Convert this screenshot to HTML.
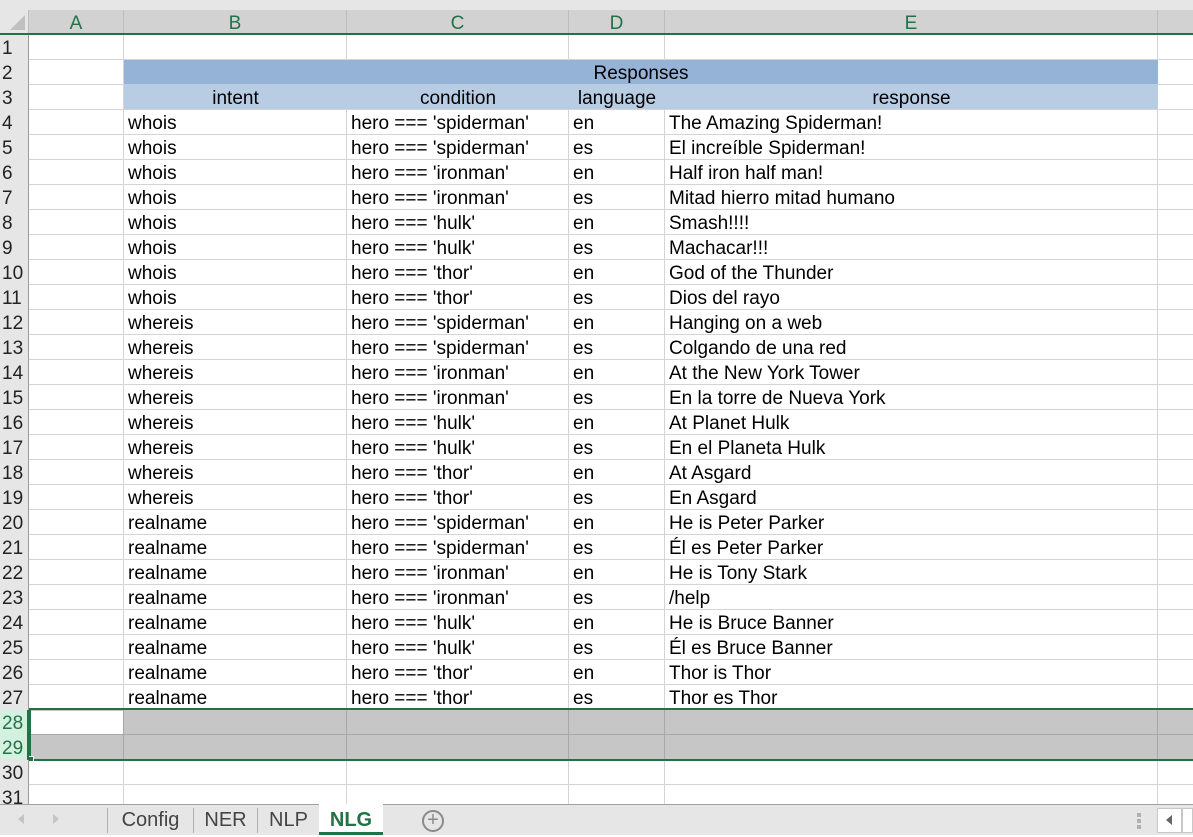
<!DOCTYPE html>
<html><head><meta charset="utf-8"><style>
*{margin:0;padding:0;box-sizing:border-box}
body{width:1193px;height:835px;overflow:hidden;background:#fff;font-family:"Liberation Sans",Arial,sans-serif;position:relative}
.a{position:absolute}
.top{left:0;top:0;width:1193px;height:10px;background:#e6e6e6}
.colh{top:10px;height:25px;background:#e6e6e6;border-bottom:2px solid #217346;left:0;width:1193px}
.ch{position:absolute;top:10px;height:23px;line-height:27px;text-align:center;color:#217346;font-size:19px;border-right:1px solid #bdbdbd;background:#d2d2d2}
.grid{left:29px;top:35px;width:1164px;height:769px;
background-image:linear-gradient(to bottom,transparent 24px,#d4d4d4 24px,#d4d4d4 25px);background-size:100% 25px}
.v{position:absolute;top:35px;height:769px;width:1px;background:#d4d4d4}
.rh{position:absolute;left:0;width:29px;height:769px;top:35px;background:#e6e6e6;border-right:1px solid #9b9b9b}
.rn{position:absolute;left:2px;font-size:19px;height:25px;line-height:27px;color:#222}
.t{position:absolute;font-size:19px;height:25px;line-height:29px;color:#000;white-space:nowrap}
.tabs{left:0;top:804px;width:1193px;height:31px;background:#e6e6e6;border-top:1px solid #a0a0a0}
.tab{position:absolute;top:804px;height:31px;line-height:33px;font-size:20px;color:#444;text-align:center}
.sep{position:absolute;top:808px;width:1px;height:25px;background:#b0b0b0}
</style></head><body>
<div class="a top"></div>
<div class="a colh"></div>
<div class="ch" style="left:0;width:29px;background:#e6e6e6;border-right:1px solid #bdbdbd"><svg width="29" height="23" style="position:absolute;left:0;top:0"><polygon points="25,5 25,20 10,20" fill="#c0c0c0"/></svg></div>
<div class="ch" style="left:29px;width:95px">A</div>
<div class="ch" style="left:124px;width:223px">B</div>
<div class="ch" style="left:347px;width:222px">C</div>
<div class="ch" style="left:569px;width:96px">D</div>
<div class="ch" style="left:665px;width:493px">E</div>
<div class="ch" style="left:1158px;width:40px"></div>
<div class="a grid"></div>
<div class="v" style="left:123px"></div><div class="v" style="left:346px"></div><div class="v" style="left:568px"></div><div class="v" style="left:664px"></div><div class="v" style="left:1157px"></div>
<div class="a" style="left:124px;top:60px;width:1034px;height:24px;background:#95b3d7"></div>
<div class="a" style="left:124px;top:84px;width:1034px;height:25px;background:#b8cce4"></div>
<div class="a" style="left:29px;top:709px;width:1164px;height:51px;background:#c6c6c6"></div>
<div class="a" style="left:29px;top:711px;width:95px;height:24px;background:#fff"></div>
<div class="a" style="left:29px;top:734px;width:1164px;height:1px;background:#a8a8a8"></div>
<div class="a" style="left:123px;top:709px;width:1px;height:51px;background:#a8a8a8"></div>
<div class="a" style="left:346px;top:709px;width:1px;height:51px;background:#a8a8a8"></div>
<div class="a" style="left:568px;top:709px;width:1px;height:51px;background:#a8a8a8"></div>
<div class="a" style="left:664px;top:709px;width:1px;height:51px;background:#a8a8a8"></div>
<div class="a" style="left:1157px;top:709px;width:1px;height:51px;background:#a8a8a8"></div>
<div class="a" style="left:29px;top:708px;width:1164px;height:2px;background:#217346"></div>
<div class="a" style="left:29px;top:759px;width:1164px;height:2px;background:#217346"></div>
<div class="a" style="left:29px;top:709px;width:2px;height:51px;background:#217346"></div>
<div class="a" style="left:28px;top:756px;width:6px;height:6px;background:#217346;border:1px solid #fff"></div>
<div class="rh"></div>
<div class="a" style="left:0;top:710px;width:29px;height:50px;background:#d3f0e0;border-right:2px solid #217346"></div>
<div class="rn" style="top:35px">1</div><div class="rn" style="top:60px">2</div><div class="rn" style="top:85px">3</div><div class="rn" style="top:110px">4</div><div class="rn" style="top:135px">5</div><div class="rn" style="top:160px">6</div><div class="rn" style="top:185px">7</div><div class="rn" style="top:210px">8</div><div class="rn" style="top:235px">9</div><div class="rn" style="top:260px">10</div><div class="rn" style="top:285px">11</div><div class="rn" style="top:310px">12</div><div class="rn" style="top:335px">13</div><div class="rn" style="top:360px">14</div><div class="rn" style="top:385px">15</div><div class="rn" style="top:410px">16</div><div class="rn" style="top:435px">17</div><div class="rn" style="top:460px">18</div><div class="rn" style="top:485px">19</div><div class="rn" style="top:510px">20</div><div class="rn" style="top:535px">21</div><div class="rn" style="top:560px">22</div><div class="rn" style="top:585px">23</div><div class="rn" style="top:610px">24</div><div class="rn" style="top:635px">25</div><div class="rn" style="top:660px">26</div><div class="rn" style="top:685px">27</div><div class="rn" style="top:710px;color:#217346">28</div><div class="rn" style="top:735px;color:#217346">29</div><div class="rn" style="top:760px">30</div><div class="rn" style="top:785px">31</div>
<div class="t" style="left:124px;width:1034px;text-align:center;top:59px">Responses</div>
<div class="t" style="left:124px;width:223px;text-align:center;top:84px">intent</div>
<div class="t" style="left:347px;width:222px;text-align:center;top:84px">condition</div>
<div class="t" style="left:569px;width:96px;text-align:center;top:84px">language</div>
<div class="t" style="left:665px;width:493px;text-align:center;top:84px">response</div>
<div style="position:absolute;left:128px;top:109px"><div class="t" style="position:relative;left:0;top:0">whois</div><div class="t" style="position:relative">whois</div><div class="t" style="position:relative">whois</div><div class="t" style="position:relative">whois</div><div class="t" style="position:relative">whois</div><div class="t" style="position:relative">whois</div><div class="t" style="position:relative">whois</div><div class="t" style="position:relative">whois</div><div class="t" style="position:relative">whereis</div><div class="t" style="position:relative">whereis</div><div class="t" style="position:relative">whereis</div><div class="t" style="position:relative">whereis</div><div class="t" style="position:relative">whereis</div><div class="t" style="position:relative">whereis</div><div class="t" style="position:relative">whereis</div><div class="t" style="position:relative">whereis</div><div class="t" style="position:relative">realname</div><div class="t" style="position:relative">realname</div><div class="t" style="position:relative">realname</div><div class="t" style="position:relative">realname</div><div class="t" style="position:relative">realname</div><div class="t" style="position:relative">realname</div><div class="t" style="position:relative">realname</div><div class="t" style="position:relative">realname</div></div>
<div style="position:absolute;left:351px;top:109px"><div class="t" style="position:relative">hero === 'spiderman'</div><div class="t" style="position:relative">hero === 'spiderman'</div><div class="t" style="position:relative">hero === 'ironman'</div><div class="t" style="position:relative">hero === 'ironman'</div><div class="t" style="position:relative">hero === 'hulk'</div><div class="t" style="position:relative">hero === 'hulk'</div><div class="t" style="position:relative">hero === 'thor'</div><div class="t" style="position:relative">hero === 'thor'</div><div class="t" style="position:relative">hero === 'spiderman'</div><div class="t" style="position:relative">hero === 'spiderman'</div><div class="t" style="position:relative">hero === 'ironman'</div><div class="t" style="position:relative">hero === 'ironman'</div><div class="t" style="position:relative">hero === 'hulk'</div><div class="t" style="position:relative">hero === 'hulk'</div><div class="t" style="position:relative">hero === 'thor'</div><div class="t" style="position:relative">hero === 'thor'</div><div class="t" style="position:relative">hero === 'spiderman'</div><div class="t" style="position:relative">hero === 'spiderman'</div><div class="t" style="position:relative">hero === 'ironman'</div><div class="t" style="position:relative">hero === 'ironman'</div><div class="t" style="position:relative">hero === 'hulk'</div><div class="t" style="position:relative">hero === 'hulk'</div><div class="t" style="position:relative">hero === 'thor'</div><div class="t" style="position:relative">hero === 'thor'</div></div>
<div style="position:absolute;left:573px;top:109px"><div class="t" style="position:relative">en</div><div class="t" style="position:relative">es</div><div class="t" style="position:relative">en</div><div class="t" style="position:relative">es</div><div class="t" style="position:relative">en</div><div class="t" style="position:relative">es</div><div class="t" style="position:relative">en</div><div class="t" style="position:relative">es</div><div class="t" style="position:relative">en</div><div class="t" style="position:relative">es</div><div class="t" style="position:relative">en</div><div class="t" style="position:relative">es</div><div class="t" style="position:relative">en</div><div class="t" style="position:relative">es</div><div class="t" style="position:relative">en</div><div class="t" style="position:relative">es</div><div class="t" style="position:relative">en</div><div class="t" style="position:relative">es</div><div class="t" style="position:relative">en</div><div class="t" style="position:relative">es</div><div class="t" style="position:relative">en</div><div class="t" style="position:relative">es</div><div class="t" style="position:relative">en</div><div class="t" style="position:relative">es</div></div>
<div style="position:absolute;left:669px;top:109px"><div class="t" style="position:relative">The Amazing Spiderman!</div><div class="t" style="position:relative">El increíble Spiderman!</div><div class="t" style="position:relative">Half iron half man!</div><div class="t" style="position:relative">Mitad hierro mitad humano</div><div class="t" style="position:relative">Smash!!!!</div><div class="t" style="position:relative">Machacar!!!</div><div class="t" style="position:relative">God of the Thunder</div><div class="t" style="position:relative">Dios del rayo</div><div class="t" style="position:relative">Hanging on a web</div><div class="t" style="position:relative">Colgando de una red</div><div class="t" style="position:relative">At the New York Tower</div><div class="t" style="position:relative">En la torre de Nueva York</div><div class="t" style="position:relative">At Planet Hulk</div><div class="t" style="position:relative">En el Planeta Hulk</div><div class="t" style="position:relative">At Asgard</div><div class="t" style="position:relative">En Asgard</div><div class="t" style="position:relative">He is Peter Parker</div><div class="t" style="position:relative">Él es Peter Parker</div><div class="t" style="position:relative">He is Tony Stark</div><div class="t" style="position:relative">/help</div><div class="t" style="position:relative">He is Bruce Banner</div><div class="t" style="position:relative">Él es Bruce Banner</div><div class="t" style="position:relative">Thor is Thor</div><div class="t" style="position:relative">Thor es Thor</div></div>
<div class="a tabs"></div>
<div class="a" style="left:18px;top:814px;width:0;height:0;border-top:5px solid transparent;border-bottom:5px solid transparent;border-right:6px solid #c4c4c4"></div>
<div class="a" style="left:53px;top:814px;width:0;height:0;border-top:5px solid transparent;border-bottom:5px solid transparent;border-left:6px solid #c4c4c4"></div>
<div class="sep" style="left:107px"></div>
<div class="tab" style="left:108px;width:85px">Config</div>
<div class="sep" style="left:193px"></div>
<div class="tab" style="left:194px;width:63px">NER</div>
<div class="sep" style="left:257px"></div>
<div class="tab" style="left:258px;width:61px">NLP</div>
<div class="tab" style="left:319px;width:64px;background:#fff;color:#217346;font-weight:bold;border-bottom:3px solid #217346;top:804px;height:31px">NLG</div>
<div class="a" style="left:422px;top:810px;width:22px;height:22px;border:2px solid #8a8a8a;border-radius:50%;text-align:center;line-height:17px;font-size:20px;color:#8a8a8a">+</div>
<div class="a" style="left:1137px;top:813px;width:4px;height:4px;background:#b0b0b0"></div>
<div class="a" style="left:1137px;top:819px;width:4px;height:4px;background:#b0b0b0"></div>
<div class="a" style="left:1137px;top:825px;width:4px;height:4px;background:#b0b0b0"></div>
<div class="a" style="left:1157px;top:808px;width:25px;height:25px;background:#fff;border:1px solid #c8c8c8"></div>
<div class="a" style="left:1166px;top:815px;width:0;height:0;border-top:5px solid transparent;border-bottom:5px solid transparent;border-right:6px solid #666"></div>
<div class="a" style="left:1182px;top:808px;width:11px;height:25px;background:#fff;border:1px solid #c8c8c8"></div>
</body></html>
